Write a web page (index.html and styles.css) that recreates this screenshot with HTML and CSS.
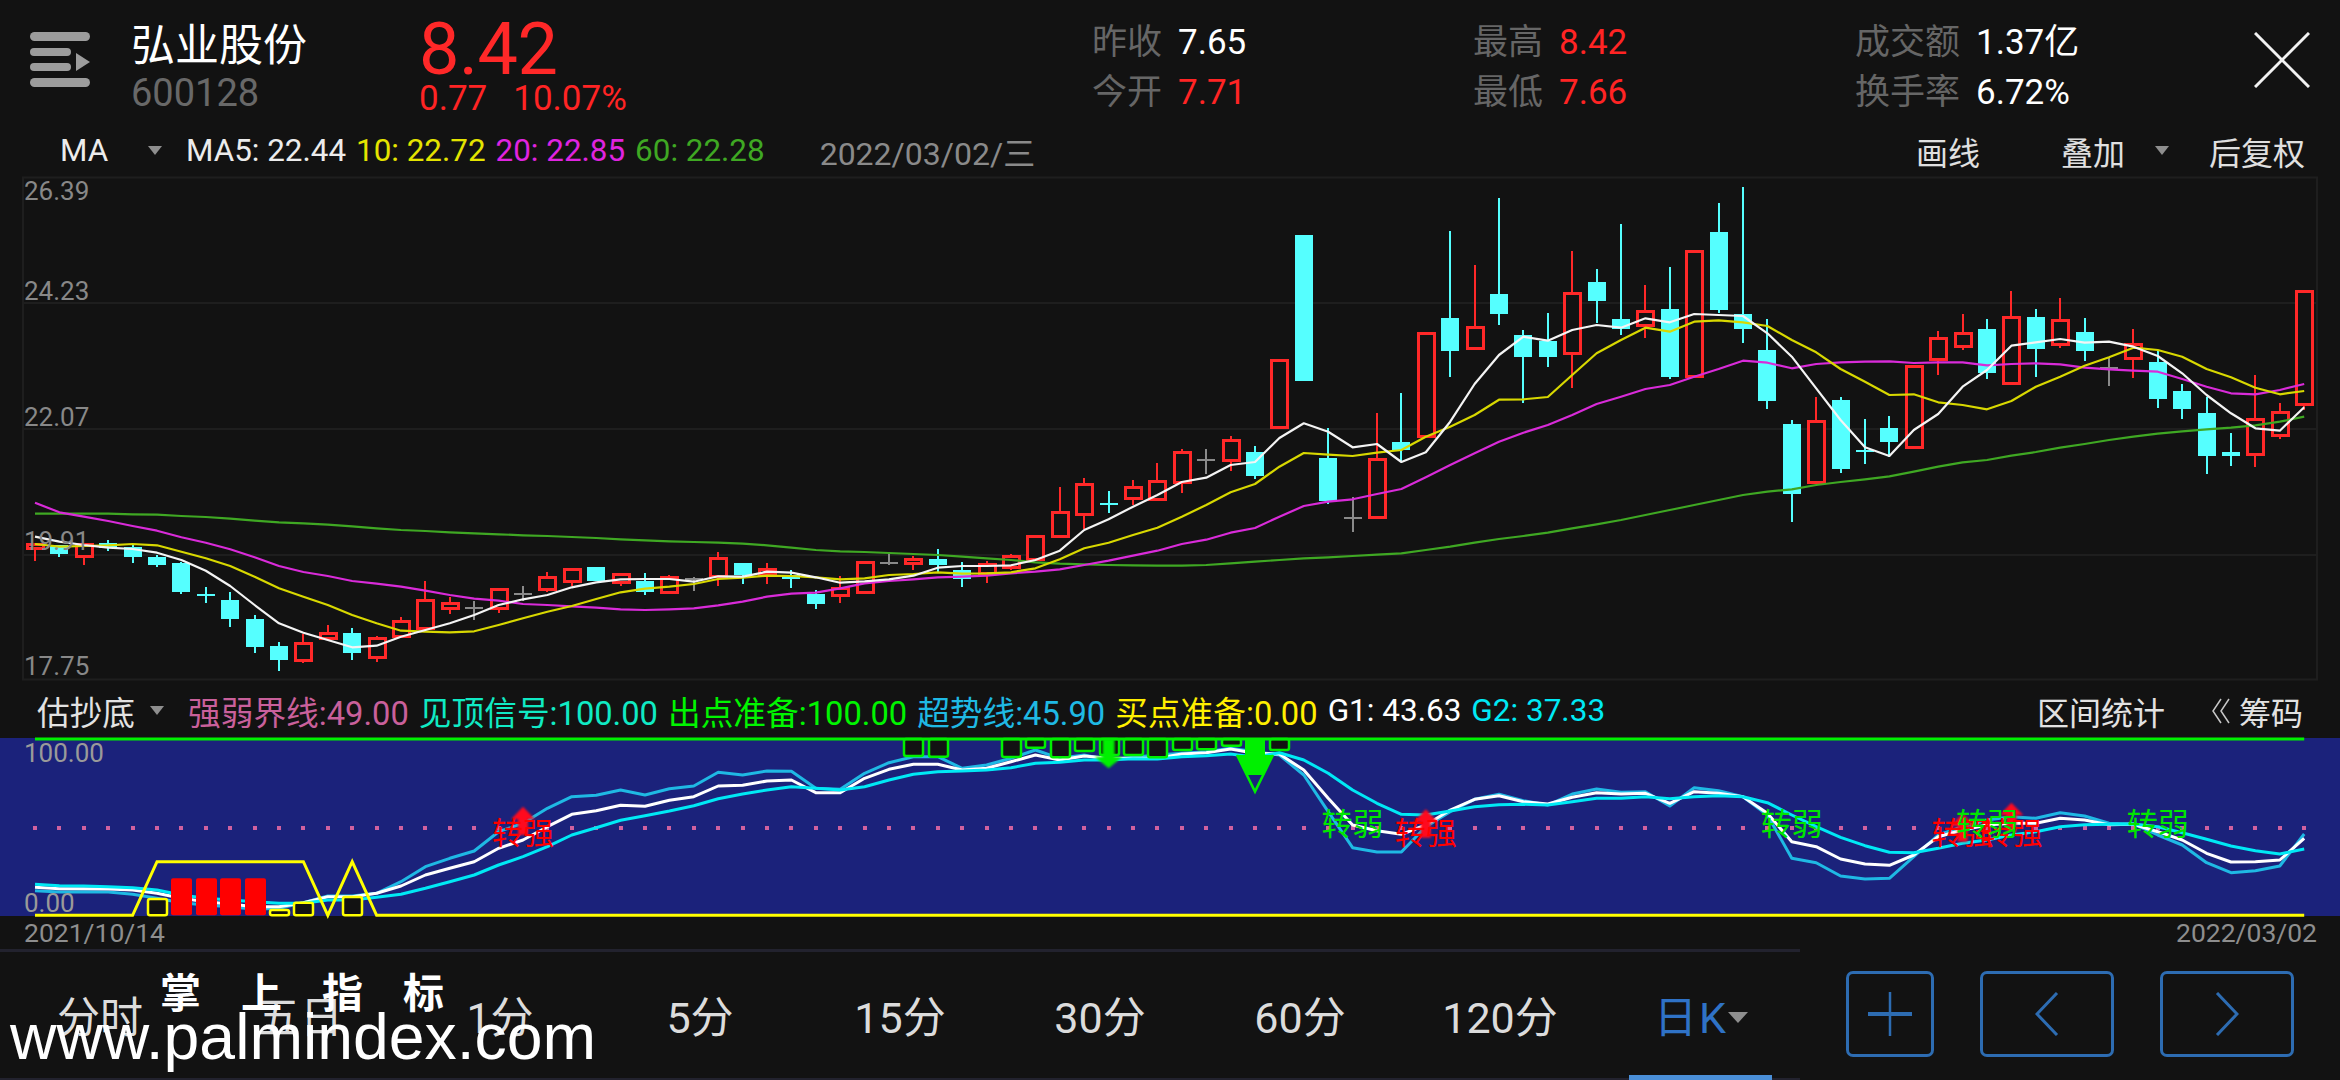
FILE: index.html
```html
<!doctype html>
<html>

<head>
    <title>弘业股份 600128</title>
    <link rel="stylesheet" href="styles.css">
</head>

<body>
    <div class="page">
        <div class="quoteBar">
            <div class="menuCell">
                <svg class="menuIcon" width="60" height="55" viewBox="0 0 60 55">
                    <rect x="0" y="0" width="60" height="9" rx="4.5" />
                    <rect x="0" y="16" width="41" height="8" rx="4" />
                    <rect x="0" y="31" width="41" height="8" rx="4" />
                    <rect x="0" y="46" width="60" height="9" rx="4.5" />
                    <polygon points="46,21 60,30 46,39" />
                </svg>
            </div>
            <div class="stock">
                <div class="stockName">弘业股份</div>
                <div class="stockCode">600128</div>
            </div>
            <div class="price">
                <div class="priceNow">8.42</div>
                <div class="priceChange"><span>0.77</span><span>10.07%</span></div>
            </div>
            <div class="stats">
                <div class="statRow"><span class="statLabel">昨收</span><span class="white">7.65</span></div>
                <div class="statRow"><span class="statLabel">今开</span><span class="red">7.71</span></div>
            </div>
            <div class="stats">
                <div class="statRow"><span class="statLabel">最高</span><span class="red">8.42</span></div>
                <div class="statRow"><span class="statLabel">最低</span><span class="red">7.66</span></div>
            </div>
            <div class="stats">
                <div class="statRow"><span class="statLabel">成交额</span><span class="white">1.37亿</span></div>
                <div class="statRow"><span class="statLabel">换手率</span><span class="white">6.72%</span></div>
            </div>
            <div class="closeCell">
                <svg width="56" height="56" viewBox="0 0 56 56">
                    <line x1="1" y1="1" x2="55" y2="55" />
                    <line x1="55" y1="1" x2="1" y2="55" />
                </svg>
            </div>
        </div>

        <div class="maBar">
            <span class="maName">MA</span>
            <span class="tri maTri"></span>
            <span class="maItem">MA5: 22.44</span>
            <span class="maItem yellow">10: 22.72</span>
            <span class="maItem magenta">20: 22.85</span>
            <span class="maItem green">60: 22.28</span>
            <span class="maDate">2022/03/02/三</span>
            <span class="maTool drawTool">画线</span>
            <span class="maTool overlayTool">叠加</span>
            <span class="tri overlayTri"></span>
            <span class="maTool">后复权</span>
        </div>

        <svg id="priceChart" class="chart" width="2340" height="504" viewBox="0 177 2340 504"></svg>

        <div class="indBar">
            <span class="indName">估抄底</span>
            <span class="tri indTri"></span>
            <span class="indItem pink">强弱界线:49.00</span>
            <span class="indItem teal">见顶信号:100.00</span>
            <span class="indItem lime">出点准备:100.00</span>
            <span class="indItem sky">超势线:45.90</span>
            <span class="indItem gold">买点准备:0.00</span>
            <span class="indItem gval white">G1: 43.63</span>
            <span class="indItem gval aqua">G2: 37.33</span>
            <span class="indTool">区间统计</span>
            <svg class="chipIcon" width="18" height="26" viewBox="0 0 18 26">
                <polyline points="9,1 1,13 9,25" />
                <polyline points="17,1 9,13 17,25" />
            </svg>
            <span class="chipTool">筹码</span>
        </div>

        <svg id="indChart" class="chart" width="2340" height="178" viewBox="0 738 2340 178"></svg>

        <div class="dateRow">
            <span>2021/10/14</span>
            <span>2022/03/02</span>
        </div>

        <div class="bottomBar">
            <div class="tabs">
                <div class="tab">分时</div>
                <div class="tab">五日</div>
                <div class="tab">1分</div>
                <div class="tab">5分</div>
                <div class="tab">15分</div>
                <div class="tab">30分</div>
                <div class="tab">60分</div>
                <div class="tab">120分</div>
                <div class="tab active">日K<span class="tri dayTri"></span></div>
            </div>
            <div class="buttons">
                <div class="zoomBtn plusBtn">
                    <svg width="44" height="44" viewBox="0 0 44 44">
                        <line x1="22" y1="0" x2="22" y2="44" class="thin" />
                        <line x1="0" y1="22" x2="44" y2="22" />
                    </svg>
                </div>
                <div class="zoomBtn">
                    <svg width="24" height="44" viewBox="0 0 24 44">
                        <polyline points="22,1 2,22 22,43" />
                    </svg>
                </div>
                <div class="zoomBtn">
                    <svg width="24" height="44" viewBox="0 0 24 44">
                        <polyline points="2,1 22,22 2,43" />
                    </svg>
                </div>
            </div>
        </div>

        <div class="stamp">掌上指标</div>
        <div class="site">www.palmindex.com</div>
    </div>

    <script src="chart.js"></script>
</body>

</html>
```

FILE: styles.css
```css
* {
    margin: 0;
    padding: 0;
    box-sizing: border-box;
}

body {
    width: 2340px;
    height: 1080px;
    overflow: hidden;
    background-color: #121212;
    font-family: Roboto, "Noto Sans CJK SC", sans-serif;
    color: #e6e6e6;
}

.page {
    position: relative;
    width: 2340px;
    height: 1080px;
    display: flex;
    flex-direction: column;
}

.white { color: #fff; }
.red { color: #ff2424; }
.yellow { color: #e4e400; }
.magenta { color: #e024e0; }
.green { color: #3fa823; }
.pink { color: #c9609b; }
.teal { color: #10eac4; }
.lime { color: #00f500; }
.sky { color: #1fb9e4; }
.gold { color: #ffef00; }
.aqua { color: #00e9f5; }

.tri {
    display: block;
    width: 0;
    height: 0;
    border-left: 7px solid transparent;
    border-right: 7px solid transparent;
    border-top: 9px solid #8e8e8e;
}

/* top quote bar */
.quoteBar {
    height: 128px;
    display: grid;
    grid-template-columns: 131px 290px 671px 381px 382px 399px 86px;
}

.menuCell {
    padding: 32px 0 0 30px;
}

.menuIcon {
    fill: #9c9c9c;
    display: block;
}

.stockName {
    margin-top: 20px;
    font-size: 44px;
    line-height: 52px;
    color: #fff;
}

.stockCode {
    font-size: 38px;
    line-height: 42px;
    color: #686868;
}

.price {
    margin-left: -2px;
}

.priceNow {
    margin-top: 13px;
    font-size: 72px;
    line-height: 74px;
    color: #ff2828;
    letter-spacing: -0.5px;
}

.priceChange {
    display: flex;
    gap: 26px;
    font-size: 35px;
    line-height: 34px;
    margin-top: -5px;
    color: #ff2424;
}

.stats {
    padding-top: 18px;
}

.statRow {
    display: flex;
    gap: 16px;
    font-size: 35px;
    line-height: 50px;
}

.statLabel {
    color: #666;
}

.closeCell {
    padding-top: 32px;
}

.closeCell line {
    stroke: #f2f2f2;
    stroke-width: 3;
}

/* MA row above the price chart */
.maBar {
    height: 49px;
    padding-bottom: 4px;
    display: flex;
    align-items: center;
    font-size: 31.4px;
    padding-left: 60px;
    color: #ececec;
}

.maName {
    width: 88px;
}

.maTri {
    margin-right: 24px;
}

.maItem {
    margin-right: 10px;
}

.maDate {
    margin-left: 45px;
    color: #8a8a8a;
    font-size: 32px;
}

.maTool {
    color: #e0e0e0;
    font-size: 32px;
}

.drawTool {
    margin-left: auto;
    margin-right: 81px;
}

.overlayTool {
    margin-right: 30px;
}

.overlayTri {
    margin-right: 40px;
}

.maBar > :last-child {
    margin-right: 35px;
}

.chart {
    display: block;
    flex-shrink: 0;
    overflow: visible;
}

.chart text {
    font-family: Roboto, "Noto Sans CJK SC", sans-serif;
}

/* indicator row */
.indBar {
    height: 57px;
    padding-top: 2px;
    display: flex;
    align-items: center;
    padding-left: 37px;
    font-size: 32.7px;
}

.indName {
    color: #e2e2e2;
    margin-right: 15px;
}

.indTri {
    margin-right: 24px;
}

.indItem {
    margin-right: 10px;
}

.gval {
    font-size: 31.5px;
    margin-right: 10px;
}

.indTool {
    margin-left: auto;
    margin-right: 47px;
    font-size: 32px;
    color: #e2e2e2;
}

.chipIcon {
    margin-right: 9px;
    fill: none;
    stroke: #c8c8c8;
    stroke-width: 1.5;
}

.chipTool {
    font-size: 32px;
    color: #e2e2e2;
    margin-right: 37px;
}

.dateRow {
    height: 33px;
    display: flex;
    justify-content: space-between;
    align-items: center;
    padding: 0 23px 0 24px;
    font-size: 26.5px;
    color: #8e8e8e;
}

/* bottom tabs and buttons */
.bottomBar {
    flex: 1;
    display: flex;
}

.tabs {
    width: 1800px;
    display: flex;
    border-top: 3px solid #22222e;
    border-bottom: 2px solid #22222e;
}

.tab {
    width: 200px;
    display: flex;
    justify-content: center;
    align-items: center;
    font-size: 43px;
    padding-bottom: 2px;
    color: #dcdcdc;
}

.tab.active {
    width: 143px;
    margin: 0 28px -2px 29px;
    padding: 0 0 0 25px;
    justify-content: flex-start;
    border-bottom: 5px solid #4a8fd8;
    letter-spacing: 2px;
    color: #2f72c6;
}

.dayTri {
    margin: 8px 0 0 0;
    border-left-width: 10px;
    border-right-width: 10px;
    border-top-width: 11px;
}

.buttons {
    width: 540px;
    padding: 22px 0 0 46px;
    display: flex;
    gap: 46px;
    align-items: flex-start;
}

.zoomBtn {
    width: 134px;
    height: 86px;
    border: 3px solid #2d6cb2;
    border-radius: 7px;
    display: flex;
    justify-content: center;
    align-items: center;
}

.plusBtn {
    width: 88px;
}

.zoomBtn line,
.zoomBtn polyline {
    fill: none;
    stroke: #2d6cb2;
    stroke-width: 4;
}

.zoomBtn line.thin {
    stroke-width: 2.5;
}

.zoomBtn polyline {
    stroke-width: 3;
}

/* watermark over the tabs */
.stamp {
    position: absolute;
    left: 160px;
    top: 968px;
    font-size: 41px;
    font-weight: 700;
    line-height: 52px;
    letter-spacing: 40px;
    color: #fff;
}

.site {
    position: absolute;
    left: 10px;
    top: 1001px;
    font-family: "Liberation Sans", Arial, sans-serif;
    font-size: 64.3px;
    line-height: 72px;
    color: #fff;
}

.sigArrow {
    filter: blur(1px);
}
```

FILE: chart.js
```js
// values are measured in thirds of a pixel from the top of each pane
const STEP = 24.4;
const LEFT = 35;
const priceY = (v) => 180 + v / 3;
const indY = (v) => 680 + v / 3;
const barX = (i) => LEFT + STEP * i;

// type, bodyTop, bodyBottom, wickTop, wickBottom
const candles = [
    ['r', 1092, 1106, 1092, 1142], ['c', 1096, 1122, 1096, 1131], ['r', 1094, 1130, 1094, 1156],
    ['c', 1090, 1105, 1080, 1114], ['c', 1100, 1131, 1095, 1148], ['c', 1132, 1156, 1125, 1162],
    ['c', 1150, 1236, 1145, 1242], ['c', 1243, 1249, 1222, 1270], ['c', 1260, 1316, 1236, 1340],
    ['c', 1317, 1400, 1305, 1420], ['c', 1398, 1439, 1387, 1472], ['r', 1390, 1442, 1363, 1448],
    ['r', 1361, 1375, 1335, 1378], ['c', 1359, 1420, 1345, 1440], ['r', 1375, 1432, 1368, 1445],
    ['r', 1324, 1370, 1311, 1372], ['r', 1262, 1346, 1203, 1350], ['r', 1271, 1285, 1250, 1303],
    ['g', 1280, 1285, 1264, 1320], ['r', 1229, 1284, 1229, 1298], ['g', 1240, 1245, 1217, 1262],
    ['r', 1193, 1227, 1175, 1235], ['r', 1168, 1204, 1168, 1218], ['c', 1162, 1203, 1162, 1203],
    ['r', 1182, 1206, 1182, 1217], ['c', 1203, 1236, 1180, 1245], ['r', 1193, 1238, 1184, 1240],
    ['g', 1195, 1200, 1190, 1232], ['r', 1136, 1190, 1117, 1218], ['c', 1150, 1184, 1150, 1212],
    ['r', 1168, 1182, 1150, 1212], ['c', 1185, 1197, 1170, 1225], ['c', 1242, 1272, 1230, 1288],
    ['r', 1225, 1247, 1188, 1268], ['r', 1148, 1237, 1142, 1237], ['g', 1145, 1150, 1115, 1155],
    ['r', 1139, 1150, 1128, 1170], ['c', 1137, 1155, 1108, 1175], ['c', 1170, 1197, 1147, 1222],
    ['r', 1154, 1180, 1143, 1210], ['r', 1130, 1163, 1122, 1170], ['r', 1068, 1138, 1068, 1138],
    ['r', 998, 1068, 920, 1068], ['r', 913, 1002, 895, 1047], ['c', 968, 975, 934, 1000],
    ['r', 923, 955, 900, 975], ['r', 904, 958, 849, 958], ['r', 818, 908, 808, 938],
    ['g', 837, 842, 807, 882], ['r', 780, 841, 769, 873], ['c', 816, 887, 798, 896],
    ['r', 540, 742, 540, 742], ['c', 165, 604, 165, 604], ['c', 834, 962, 745, 972],
    ['g', 1012, 1017, 952, 1056], ['r', 838, 1012, 698, 1012], ['c', 787, 811, 640, 842],
    ['r', 461, 770, 461, 770], ['c', 415, 513, 153, 590], ['r', 441, 506, 254, 506],
    ['c', 343, 401, 54, 435], ['c', 466, 532, 450, 670], ['c', 482, 532, 400, 560],
    ['r', 341, 520, 212, 623], ['c', 307, 362, 268, 430], ['c', 418, 448, 132, 465],
    ['r', 393, 436, 316, 475], ['c', 387, 590, 262, 598], ['r', 213, 590, 213, 590],
    ['c', 155, 390, 70, 400], ['c', 401, 447, 22, 490], ['c', 510, 664, 418, 688],
    ['c', 731, 942, 720, 1026], ['r', 724, 908, 652, 908], ['c', 660, 867, 652, 878],
    ['c', 811, 815, 717, 853], ['c', 745, 786, 707, 830], ['r', 558, 802, 558, 806],
    ['r', 474, 538, 452, 585], ['r', 461, 500, 401, 510], ['c', 448, 578, 418, 598],
    ['r', 413, 610, 334, 610], ['c', 410, 508, 388, 590], ['r', 422, 492, 354, 503],
    ['c', 457, 512, 415, 543], ['g', 562, 567, 532, 617], ['r', 494, 534, 448, 593],
    ['c', 546, 658, 510, 684], ['c', 632, 687, 612, 717], ['c', 698, 828, 650, 882],
    ['c', 815, 828, 760, 858], ['r', 719, 822, 585, 861], ['r', 696, 766, 670, 778],
    ['r', 333, 672, 333, 690]
];

const ma5 = [1070, 1085, 1095, 1103, 1107, 1118, 1140, 1172, 1218, 1275, 1330, 1358, 1380, 1402, 1397, 1370,
    1350, 1330, 1305, 1275, 1258, 1245, 1222, 1207, 1198, 1197, 1197, 1205, 1189, 1190, 1175, 1178,
    1192, 1208, 1204, 1198, 1187, 1163, 1158, 1158, 1156, 1140, 1112, 1050, 1018, 980, 945, 906, 893,
    855, 846, 774, 730, 755, 802, 792, 846, 817, 725, 612, 525, 470, 482, 450, 435,
    443, 415, 427, 402, 405, 408, 460, 530, 625, 720, 802, 828, 750, 702, 620, 570, 497, 487, 477,
    488, 485, 500, 528, 580, 645, 700, 745, 752, 682];

const ma10 = [1092, 1100, 1098, 1096, 1092, 1096, 1115, 1135, 1158, 1190, 1225, 1250, 1275, 1305, 1330, 1352,
    1355, 1357, 1354, 1335, 1315, 1295, 1278, 1257, 1237, 1226, 1220, 1212, 1197, 1193, 1187, 1188,
    1192, 1198, 1195, 1185, 1182, 1177, 1181, 1180, 1177, 1165, 1138, 1105, 1088, 1065, 1043, 1010, 975,
    937, 912, 860, 819, 824, 828, 818, 810, 770, 740, 705, 659, 658, 651, 585, 520,
    480, 443, 455, 425, 421, 427, 438, 480, 517, 567, 605, 645, 643, 667, 675, 688, 663, 620, 590,
    557, 532, 503, 510, 530, 567, 592, 623, 643, 633];

const ma20 = [968, 997, 1010, 1023, 1038, 1052, 1072, 1088, 1108, 1132, 1158, 1176, 1188, 1203, 1211, 1220,
    1232, 1245, 1256, 1262, 1272, 1275, 1279, 1283, 1288, 1290, 1288, 1285, 1276, 1265, 1250, 1241,
    1238, 1225, 1210, 1203, 1198, 1192, 1190, 1187, 1180, 1175, 1168, 1155, 1142, 1127, 1112, 1092, 1079,
    1058, 1044, 1010, 978, 965, 958, 942, 927, 892, 855, 820, 785, 758, 735, 705, 672,
    650, 627, 615, 590, 567, 542, 548, 565, 552, 547, 545, 544, 549, 547, 547, 556, 552, 550, 553,
    563, 568, 572, 575, 597, 620, 640, 643, 630, 612];

const ma60 = [1001, 1001, 1001, 1001, 1003, 1004, 1008, 1011, 1016, 1022, 1027, 1030, 1034, 1039, 1045, 1050,
    1053, 1057, 1060, 1063, 1066, 1068, 1071, 1074, 1078, 1081, 1084, 1086, 1088, 1091, 1096, 1103,
    1110, 1114, 1116, 1119, 1122, 1125, 1130, 1135, 1140, 1147, 1151, 1153, 1155, 1156, 1157, 1157, 1155,
    1150, 1145, 1140, 1135, 1132, 1128, 1124, 1120, 1110, 1100, 1088, 1077, 1068, 1058, 1045, 1033,
    1020, 1005, 990, 975, 960, 945, 935, 928, 915, 906, 898, 889, 875, 860, 847, 840, 827, 816, 803,
    792, 780, 770, 761, 754, 748, 743, 736, 725, 710];

const trend = [632, 636, 635, 636, 643, 655, 668, 675, 680, 688, 685, 668, 648, 648, 640, 605,
    560, 535, 513, 455, 430, 385, 350, 346, 330, 345, 326, 318, 277, 285, 273, 274,
    325, 328, 280, 248, 230, 230, 265, 255, 235, 210, 235, 225, 240, 232, 225, 220, 215, 205, 215, 225,
    285, 395, 503, 516, 516, 440, 395, 358, 343, 362, 375, 342, 327,
    337, 335, 378, 323, 332, 350, 405, 535, 548, 588, 597, 595, 530, 465, 440, 420, 410, 415, 398, 408,
    430, 432, 465, 495, 548, 578, 572, 558, 462];

const g1 = [622, 626, 626, 627, 630, 640, 655, 665, 672, 680, 680, 668, 650, 650, 640, 618,
    585, 565, 545, 505, 480, 440, 403, 392, 376, 379, 361, 350, 318, 316, 303, 300,
    338, 338, 295, 268, 253, 253, 270, 265, 245, 225, 240, 228, 235, 235, 235, 222, 218, 207, 220, 222,
    270, 355, 435, 452, 463, 435, 390, 358, 347, 365, 372, 352, 338,
    342, 340, 370, 335, 340, 350, 400, 485, 500, 537, 552, 556, 525, 470, 450, 435, 430, 430, 415, 420,
    434, 433, 455, 480, 520, 546, 545, 540, 475];

const g2 = [613, 617, 618, 620, 623, 630, 645, 655, 660, 665, 670, 670, 660, 660, 652, 643,
    625, 605, 585, 555, 530, 500, 465, 443, 421, 407, 393, 377, 356, 342, 330, 320,
    325, 330, 320, 300, 283, 275, 273, 270, 263, 250, 247, 240, 240, 236, 237, 230, 227, 222, 232, 218,
    240, 280, 330, 370, 403, 405, 393, 380, 374, 373, 375, 365, 355,
    355, 350, 356, 350, 347, 350, 368, 405, 440, 472, 497, 517, 518, 505, 490, 480, 465, 455, 440, 434,
    433, 432, 440, 458, 478, 498, 512, 522, 507];

function polyline(values, toY, color, width) {
    const points = values.map((v, i) => barX(i).toFixed(1) + ',' + toY(v).toFixed(1)).join(' ');
    return `<polyline points="${points}" fill="none" stroke="${color}" stroke-width="${width}" stroke-linejoin="round"/>`;
}

function rect(x, y, w, h, attrs) {
    return `<rect x="${x}" y="${y}" width="${w}" height="${h}" ${attrs}/>`;
}

function drawCandle(c, i) {
    const colors = { r: '#ff2828', c: '#55ffff', g: '#8a8a8a' };
    const color = colors[c[0]];
    const x = Math.round(barX(i));
    const top = priceY(c[1]);
    const bottom = priceY(c[2]);
    let out = rect(x - 1, priceY(c[3]), 2, priceY(c[4]) - priceY(c[3]), `fill="${color}"`);
    if (c[0] === 'r') {
        // hollow body, black inside so the wick does not show through
        out += rect(x - 8, top, 16, bottom - top, `fill="#121212" stroke="${color}" stroke-width="3"`);
    } else {
        out += rect(x - 9, top, 18, Math.max(bottom - top, 2), `fill="${color}"`);
    }
    return out;
}

function drawPrice() {
    let s = rect(23, 177.5, 2294, 502, 'fill="none" stroke="#1e1e1e" stroke-width="2"');
    [303, 429, 555].forEach((y) => {
        s += `<line x1="24" y1="${y}" x2="2316" y2="${y}" stroke="#232323" stroke-width="1.5"/>`;
    });
    const labels = [['26.39', 200], ['24.23', 300], ['22.07', 426], ['19.91', 550], ['17.75', 675]];
    s += '<g shape-rendering="crispEdges">' + candles.map(drawCandle).join('') + '</g>';
    s += polyline(ma60, priceY, '#3fa823', 2.2);
    s += polyline(ma20, priceY, '#d92bd9', 2.2);
    s += polyline(ma10, priceY, '#d8d800', 2.2);
    s += polyline(ma5, priceY, '#f4f4f4', 2.2);
    labels.forEach((l) => {
        s += `<text x="24" y="${l[1]}" font-size="26" fill="#888">${l[0]}</text>`;
    });
    document.getElementById('priceChart').innerHTML = s;
}

function upArrow(i, tip) {
    const x = barX(i);
    const p = [[x, tip], [x + 12, tip + 38], [x + 5, tip + 38], [x + 5, tip + 85], [x - 5, tip + 85], [x - 5, tip + 38], [x - 12, tip + 38]];
    return `<polygon class="sigArrow" fill="#ff0a1e" points="${p.map((q) => q[0] + ',' + indY(q[1])).join(' ')}"/>`;
}

function tagText(i, word, color, v) {
    return `<text x="${barX(i)}" y="${indY(v)}" text-anchor="middle" font-size="31" fill="${color}">${word}</text>`;
}

function drawInd() {
    let s = rect(0, 738, 2340, 178, 'fill="#1b227b"');
    candles.forEach((c, i) => {
        s += rect(Math.round(barX(i)) - 2, 826, 4, 4, 'fill="#d0619f"');
    });

    // hollow pressure boxes along the top
    const greenBoxes = [[36, 228], [37, 230], [40, 231], [41, 203], [42, 232], [43, 213], [44, 225], [45, 225], [46, 232], [47, 210], [48, 208], [49, 197], [51, 210]];

    s += polyline(trend, indY, '#1fb9e4', 3);
    s += polyline(g1, indY, '#ffffff', 3);
    s += polyline(g2, indY, '#00e9f5', 3);

    greenBoxes.forEach((b) => {
        const x = Math.round(barX(b[0]));
        s += rect(x - 9, 739, 19, indY(b[1]) - 739, 'fill="#121212" stroke="#00f000" stroke-width="2.5" rx="2"');
    });

    // small arrow and the large drop marker
    const a = barX(44);
    s += `<polygon class="sigArrow" fill="#00f000" points="${a - 6},739 ${a + 6},739 ${a + 6},${indY(230)} ${a + 14},${indY(230)} ${a},${indY(265)} ${a - 14},${indY(230)} ${a - 6},${indY(230)}"/>`;
    const d = barX(50);
    s += `<polygon fill="#00f000" points="${d - 18},${indY(225)} ${d - 10},${indY(225)} ${d - 10},739 ${d + 10},739 ${d + 10},${indY(225)} ${d + 18},${indY(225)} ${d + 9},${indY(285)} ${d - 9},${indY(285)}"/>`;
    s += `<polyline fill="none" stroke="#00f000" stroke-width="2.5" points="${d - 18},${indY(225)} ${d},${indY(335)} ${d + 18},${indY(225)}"/>`;

    // yellow step line with its boxes, then red bars
    const base = indY(706);
    const top = indY(545);
    const yl = [[LEFT, base], [barX(4), base], [barX(5), top], [barX(11), top], [barX(12), base], [barX(13), top], [barX(14), base], [barX(93), base]];
    s += `<polyline fill="none" stroke="#ffff00" stroke-width="3" points="${yl.map((q) => q.join(',')).join(' ')}"/>`;
    [[5, 657], [10, 690], [11, 668], [13, 651]].forEach((b) => {
        const x = Math.round(barX(b[0]));
        s += rect(x - 9, indY(b[1]), 19, base - indY(b[1]), 'fill="#121212" stroke="#ffff00" stroke-width="2.5" rx="2"');
    });
    [6, 7, 8, 9].forEach((i) => {
        s += rect(Math.round(barX(i)) - 10, indY(595), 21, base - indY(595), 'fill="#ff0000" rx="2"');
    });

    s += `<line x1="${LEFT}" y1="739" x2="${barX(93)}" y2="739" stroke="#00f000" stroke-width="3"/>`;

    [[20, 380], [57, 388], [79, 400], [81, 368]].forEach((m) => {
        s += upArrow(m[0], m[1]);
    });
    [20, 57, 79, 81].forEach((i) => {
        s += tagText(i, '转强', '#ff0000', 493);
    });
    [54, 72, 80, 87].forEach((i) => {
        s += tagText(i, '转弱', '#00e600', 466);
    });

    s += '<text x="24" y="762" font-size="26" fill="#9a9a9a">100.00</text>';
    s += '<text x="24" y="912" font-size="26" fill="#9a9a9a">0.00</text>';
    document.getElementById('indChart').innerHTML = s;
}

drawPrice();
drawInd();
```
